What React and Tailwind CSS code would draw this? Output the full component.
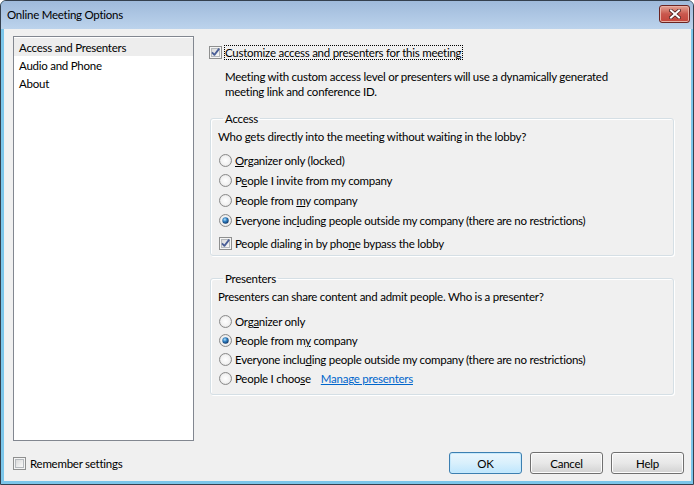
import React from "react";

// Win7 style radio
function Radio({ checked }) {
  return (
    <svg width="13" height="13" viewBox="0 0 13 13" className="shrink-0">
      <defs>
        <radialGradient id="rfill" cx="0.5" cy="0.5" r="0.6">
          <stop offset="0" stopColor="#ffffff" />
          <stop offset="0.6" stopColor="#f2f2f2" />
          <stop offset="1" stopColor="#cfcfcf" />
        </radialGradient>
        <radialGradient id="rdot" cx="0.4" cy="0.35" r="0.7">
          <stop offset="0" stopColor="#b6e2fb" />
          <stop offset="0.45" stopColor="#2f7fc1" />
          <stop offset="1" stopColor="#0d2f5e" />
        </radialGradient>
      </defs>
      <circle cx="6.5" cy="6.5" r="6" fill="url(#rfill)" stroke="#8a8a8a" strokeWidth="1" />
      {checked && <circle cx="6.5" cy="6.5" r="3.2" fill="url(#rdot)" />}
    </svg>
  );
}

// Win7 style checkbox
function Check({ checked }) {
  return (
    <svg width="13" height="13" viewBox="0 0 13 13" className="shrink-0">
      <defs>
        <linearGradient id="cfill" x1="0" y1="0" x2="1" y2="1">
          <stop offset="0" stopColor="#d8d8d8" />
          <stop offset="1" stopColor="#fbfbfb" />
        </linearGradient>
      </defs>
      <rect x="0.5" y="0.5" width="12" height="12" fill="#f4f4f4" stroke="#8e8f8f" />
      <rect x="2.5" y="2.5" width="8" height="8" fill="url(#cfill)" stroke="#b5b9bd" />
      {checked && (
        <path d="M3 6.3 L5.4 8.9 L10.2 2.6" fill="none" stroke="#4a5f97" strokeWidth="1.8" strokeLinejoin="round" />
      )}
    </svg>
  );
}

function Btn({ children, primary }) {
  return (
    <button
      className={
        primary
          ? "w-[73px] h-[22px] rounded-[3px] border border-[#3c7fb1] bg-gradient-to-b from-[#eaf6fd] via-[#d9f0fc] to-[#bee6fd] shadow-[inset_0_0_0_1px_#c6e9fc] text-black"
          : "w-[73px] h-[22px] rounded-[3px] border border-[#707070] bg-gradient-to-b from-[#f2f2f2] via-[#e8e8e8] to-[#d2d2d2] shadow-[inset_0_0_0_1px_#fcfcfc] text-black"
      }
    >
      {children}
    </button>
  );
}

function Option({ checked, children, radio = true, h = "h-[20px]" }) {
  return (
    <div className={`flex items-center ${h}`}>
      {radio ? <Radio checked={checked} /> : <Check checked={checked} />}
      <span className="ml-[3px] whitespace-nowrap">{children}</span>
    </div>
  );
}

export default function App() {
  return (
    <div
      className="w-[694px] h-[485px] flex flex-col border border-[#34404e] rounded-t-[6px] bg-[#7cc6ea] overflow-hidden text-[11.5px] tracking-[-0.25px] leading-[15px] text-black"
      style={{ fontFamily: "'Segoe UI', Lato, 'Liberation Sans', sans-serif" }}
    >
      {/* title bar */}
      <div className="h-[28px] shrink-0 flex items-start justify-between pl-[6px] pr-[3px] bg-gradient-to-b from-[#9fbadb] to-[#bcd3ec]">
        <div className="mt-[6px] text-black">Online Meeting Options</div>
        <div className="mt-[4px] w-[31px] h-[18px] rounded-[3px] border border-[#6b2421] bg-gradient-to-b from-[#e3a395] via-[#c9574d] to-[#c4453b] shadow-[inset_0_0_0_1px_#e8b0a6] flex items-center justify-center">
          <svg width="12" height="10" viewBox="0 0 12 10">
            <path d="M2 1.5 L10 8.5 M10 1.5 L2 8.5" stroke="#4a1e1e" strokeWidth="3.6" strokeLinecap="square" />
            <path d="M2 1.5 L10 8.5 M10 1.5 L2 8.5" stroke="#ffffff" strokeWidth="2" strokeLinecap="square" />
          </svg>
        </div>
      </div>

      {/* client */}
      <div className="flex-1 ml-[3px] mr-[2px] mb-[3px] bg-[#f0f0f0] flex flex-col">
        <div className="flex pl-[9px] pt-[7px]">
          {/* nav list */}
          <div className="w-[181px] h-[405px] shrink-0 border border-[#828790] bg-white py-[1px]">
            <div className="h-[18px] flex items-center pl-[5px] bg-[#ededed]">Access and Presenters</div>
            <div className="h-[18px] flex items-center pl-[5px]">Audio and Phone</div>
            <div className="h-[18px] flex items-center pl-[5px]">About</div>
          </div>

          {/* content */}
          <div className="ml-[15px] w-[466px]">
            <div className="mt-[8px] h-[16px] flex items-center">
              <Check checked />
              <span className="ml-[2px] border border-dotted border-black leading-[13px] pr-[1px]">
                Customize access and presenters for this meeting
              </span>
            </div>

            <p className="mt-[9px] pl-[16px]">
              Meeting with custom access level or presenters will use a dynamically generated
              <br />
              meeting link and conference ID.
            </p>

            <fieldset className="mt-[12px] ml-[1px] w-[464px] border border-[#d5dfe5] rounded-[3px] shadow-[inset_1px_1px_0_#ffffff,1px_1px_0_#ffffff] pl-[7px] pb-[2px]">
              <legend className="ml-[5px] px-[2px]">Access</legend>
              <div className="mt-[3px]">Who gets directly into the meeting without waiting in the lobby?</div>
              <div className="mt-[6px] pl-[1px]">
                <Option>
                  <u>O</u>rganizer only (locked)
                </Option>
                <Option>
                  P<u>e</u>ople I invite from my company
                </Option>
                <Option>
                  People from <u>m</u>y company
                </Option>
                <Option checked>
                  Everyone inc<u>l</u>uding people outside my company (there are no restrictions)
                </Option>
                <div className="mt-[3px]">
                  <Option radio={false} checked>
                    People dialing in by pho<u>n</u>e bypass the lobby
                  </Option>
                </div>
              </div>
            </fieldset>

            <fieldset className="mt-[15px] ml-[1px] w-[464px] border border-[#d5dfe5] rounded-[3px] shadow-[inset_1px_1px_0_#ffffff,1px_1px_0_#ffffff] pl-[7px] pb-[6px]">
              <legend className="ml-[5px] px-[2px]">Presenters</legend>
              <div className="mt-[3px]">Presenters can share content and admit people. Who is a presenter?</div>
              <div className="mt-[8px] pl-[1px]">
                <Option h="h-[19px]">
                  Org<u>a</u>nizer only
                </Option>
                <Option h="h-[19px]" checked>
                  People from m<u>y</u> company
                </Option>
                <Option h="h-[19px]">
                  Everyone inclu<u>d</u>ing people outside my company (there are no restrictions)
                </Option>
                <div className="flex items-center h-[19px]">
                  <Radio />
                  <span className="ml-[3px]">
                    People I choo<u>s</u>e
                  </span>
                  <a className="ml-[10px] text-[#0066cc] underline cursor-pointer">Manage presenters</a>
                </div>
              </div>
            </fieldset>
          </div>
        </div>

        {/* bottom row */}
        <div className="mt-[11px] h-[22px] flex items-center justify-between pl-[9px] pr-[7px]">
          <div className="flex items-center">
            <Check />
            <span className="ml-[4px]">Remember settings</span>
          </div>
          <div className="flex gap-[8px]">
            <Btn primary>OK</Btn>
            <Btn>Cancel</Btn>
            <Btn>Help</Btn>
          </div>
        </div>
      </div>
    </div>
  );
}
